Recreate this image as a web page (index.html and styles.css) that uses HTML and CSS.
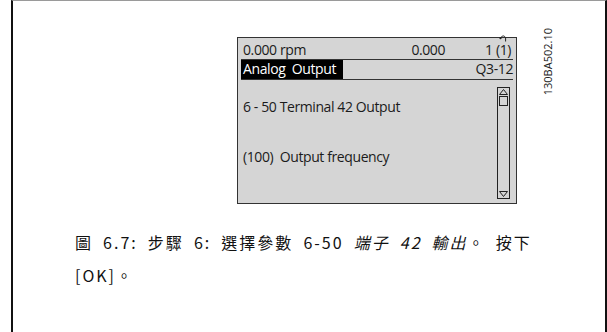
FILE: index.html
```html
<!DOCTYPE html>
<html lang="zh-Hant">
<head>
	<meta charset="UTF-8">
	<title>步驟 6</title>

	<link rel="stylesheet" href="styles.css">
</head>
<body>
<div class="page">
	<div class="figure">
		<div class="lcd">
			<div class="lcd-row lcd-status">
				<span class="speed">0.000 rpm</span>
				<span class="value">0.000</span>
				<span class="setup">1 <span class="setup-edit">(1)<svg class="back-icon" width="8" height="7" viewBox="0 0 8 7"><circle cx="1.5" cy="3.2" r="1.1" fill="#222"/><path d="M2 2.4 Q4.5 -0.6 6.6 2.6 L6.6 6.5" fill="none" stroke="#222" stroke-width="1"/></svg></span></span>
			</div>
			<div class="lcd-row lcd-title">
				<span class="menu-name">Analog&nbsp; Output</span>
				<span class="menu-code">Q3-12</span>
			</div>
			<div class="lcd-body">
				<div class="lcd-lines">
					<p class="param">6 - 50 Terminal 42 Output</p>
					<p class="option">(100)&nbsp; Output frequency</p>
				</div>
				<svg class="scrollbar" width="13" height="112" viewBox="0 0 13 112">
					<rect x="0.5" y="0.5" width="12" height="111" fill="none" stroke="#222"/>
					<path d="M2.5 7.5 L6.5 2.5 L10.5 7.5 Z" fill="none" stroke="#222"/>
					<rect x="2.5" y="9.5" width="8" height="9" fill="none" stroke="#222"/>
					<path d="M2.5 104.5 L6.5 109.5 L10.5 104.5 Z" fill="none" stroke="#222"/>
				</svg>
			</div>
		</div>
		<span class="drawing-no">130BA502.10</span>
	</div>
	<p class="caption">圖 6.7: 步驟 6: 選擇參數 6-50 <i>端子 42 輸出</i>。 按下<br>[OK]。</p>
</div>
</body>
</html>
```

FILE: styles.css
```css
*{
    margin: 0;
    padding: 0;
}

body{
    width: 100%;
    height: 100vh;
    background: #fff;
    overflow: hidden;
}

.page{
    margin-left: 11px;
    width: 592px;
    height: 340px;
    border-top: 1px solid #9a9a9a;
    border-left: 2px solid #111;
    border-right: 2px solid #111;
}

.figure{
    display: flex;
    align-items: flex-start;
    padding: 27px 0 0 224px;
}

.lcd{
    margin-top: 9px;
    width: 278px;
    height: 165px;
    border: 1px solid #333;
    background: #d5d5d5;
    color: #1b1b1b;
    font-family: "Open Sans", "Noto Sans", sans-serif;
    font-size: 14px;
    letter-spacing: -0.4px;
    display: flex;
    flex-direction: column;
}

.lcd-row{
    display: flex;
    align-items: flex-end;
    margin: 0 3px;
    border-bottom: 1px solid #333;
}

.lcd-status{
    height: 22px;
    padding: 0 2px;
    line-height: 18px;
}

.speed{
    flex: 1;
}

.value{
    margin-right: 40px;
}

.setup-edit{
    position: relative;
}

.back-icon{
    position: absolute;
    left: 3px;
    top: -5px;
}

.lcd-title{
    height: 19px;
    align-items: stretch;
}

.menu-name{
    flex: none;
    background: #000;
    color: #fff;
    padding: 0 7px 0 2px;
    line-height: 18px;
}

.menu-code{
    margin-left: auto;
    line-height: 18px;
}

.lcd-body{
    flex: 1;
    display: flex;
    padding: 7px 6px 4px 5px;
}

.lcd-lines{
    flex: 1;
}

.param{
    margin-top: 10px;
}

.option{
    margin-top: 31px;
}

.drawing-no{
    margin-left: 23px;
    writing-mode: vertical-rl;
    transform: rotate(180deg);
    font-family: "Open Sans", "Noto Sans", sans-serif;
    font-size: 11px;
    color: #222;
}

.caption{
    margin: 22px 0 0 62px;
    font-family: "Noto Sans CJK TC", "Noto Sans CJK JP", sans-serif;
    font-size: 16px;
    letter-spacing: 2px;
    word-spacing: 4.5px;
    line-height: 33px;
    color: #111;
}
```
